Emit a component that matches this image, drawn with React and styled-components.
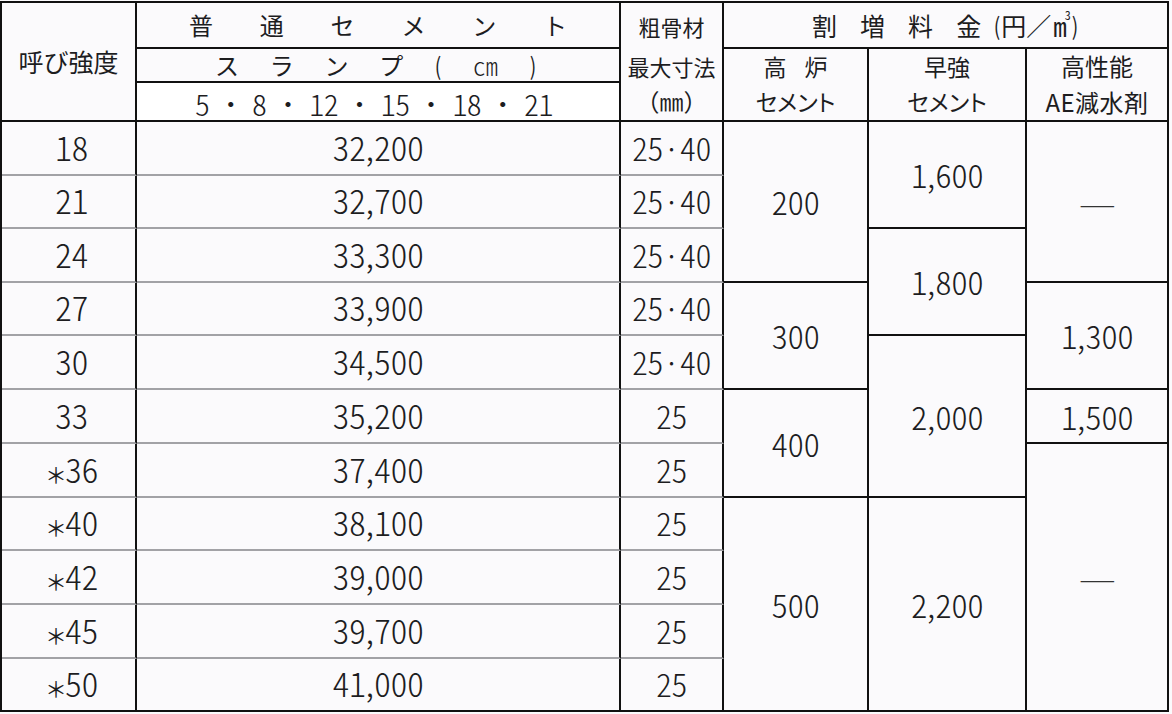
import React from "react";
import styled, { createGlobalStyle } from "styled-components";

const Global = createGlobalStyle`
  html, body { margin: 0; padding: 0; background: #fbfafc; }
  body {
    font-family: "Noto Sans CJK JP", "Noto Sans", sans-serif;
    color: #1d1d1f;
  }
`;

const Page = styled.div`
  width: 1172px;
  height: 714px;
  box-sizing: border-box;
  padding-top: 1px;
  overflow: hidden;
`;

const Table = styled.div`
  display: grid;
  grid-template-columns: 135px 484px 103px 145px 158px 142px;
  grid-template-rows: 46px 34px 39px 54px 53px 54px 53px 54px 54px 54px 53px 54px 54px 53px;
  border-left: 2px solid #111;
  border-top: 2px solid #111;
  width: max-content;
`;

const lineFor = (l) =>
  l === "none" ? "0" : l === "gray" ? "2px solid #a2a2a6" : "2px solid #111";

const Cell = styled.div`
  box-sizing: border-box;
  grid-column: ${(p) => p.$col};
  grid-row: ${(p) => p.$row};
  border-right: 2px solid #111;
  border-bottom: ${(p) => lineFor(p.$line)};
  display: flex;
  align-items: center;
  justify-content: center;
  padding-top: ${(p) => p.$pt || 0}px;
  padding-bottom: ${(p) => p.$pb || 0}px;
  padding-left: ${(p) => p.$pl || 0}px;
  background: ${(p) => p.$bg || "transparent"};
  line-height: 1;
  white-space: nowrap;
`;

const Num = styled.span`
  font-family: "Noto Sans CJK JP", "Liberation Sans", sans-serif;
  font-feature-settings: "hwid";
  font-size: ${(p) => p.$size || 34}px;
  font-weight: 300;
  letter-spacing: ${(p) => (p.$ls === undefined ? -0.5 : p.$ls)}px;
`;

const Comma = styled.span`
  font-feature-settings: normal;
  letter-spacing: 0;
`;

const Star = styled.span`
  font-family: "Noto Sans CJK JP", sans-serif;
  font-feature-settings: normal;
  font-weight: 400;
  font-size: 22px;
  letter-spacing: 0;
  margin-right: -2px;
`;

const Label = styled.span`
  font-size: ${(p) => p.$size || 23}px;
  font-feature-settings: ${(p) => (p.$palt ? '"palt"' : "normal")};
  letter-spacing: ${(p) => p.$ls || 0}px;
`;

const Spread = styled.div`
  width: ${(p) => p.$w}px;
  display: flex;
  justify-content: space-between;
  align-items: center;
  font-size: ${(p) => p.$size || 24}px;
  margin-left: ${(p) => p.$ml || 0}px;
`;

const Gap = styled.div`
  display: flex;
  align-items: center;
  gap: ${(p) => p.$gap}px;
  font-size: ${(p) => p.$size || 23}px;
`;

const Paren = styled.span`
  font-size: 24px;
  transform: scaleX(0.8);
`;

const Unit = styled.span`
  display: flex;
  align-items: center;
  margin-left: 12px;
  font-size: 25px;
`;

const Meter = styled.span`
  position: relative;
  font-family: "Noto Sans Mono CJK JP", "Noto Sans CJK JP", sans-serif;
  font-size: 27px;
  margin-left: 2px;
  margin-right: 4px;
`;

const Cube = styled.span`
  position: absolute;
  right: -4px;
  top: -3px;
  font-size: 12px;
`;

const Dash = styled.span`
  font-size: 30px;
  font-weight: 300;
  transform: scaleX(1.4);
  color: #333;
`;

const rows = [
  ["18", "32,200", "25·40"],
  ["21", "32,700", "25·40"],
  ["24", "33,300", "25·40"],
  ["27", "33,900", "25·40"],
  ["30", "34,500", "25·40"],
  ["33", "35,200", "25"],
  ["＊36", "37,400", "25"],
  ["＊40", "38,100", "25"],
  ["＊42", "39,000", "25"],
  ["＊45", "39,700", "25"],
  ["＊50", "41,000", "25"],
];

const furnace = [
  ["200", "4 / 7"],
  ["300", "7 / 9"],
  ["400", "9 / 11"],
  ["500", "11 / 15"],
];
const early = [
  ["1,600", "4 / 6"],
  ["1,800", "6 / 8"],
  ["2,000", "8 / 11"],
  ["2,200", "11 / 15"],
];
const ae = [
  ["—", "4 / 7"],
  ["1,300", "7 / 9"],
  ["1,500", "9 / 10"],
  ["—", "10 / 15"],
];

function Amount({ v, size }) {
  const parts = v.split(",");
  return (
    <Num $size={size}>
      {parts.map((p, i) => (
        <React.Fragment key={i}>
          {i > 0 && <Comma>,</Comma>}
          {p}
        </React.Fragment>
      ))}
    </Num>
  );
}

function Strength({ v }) {
  if (v.startsWith("＊")) {
    return (
      <Num>
        <Star>＊</Star>
        {v.slice(1)}
      </Num>
    );
  }
  return <Num>{v}</Num>;
}

function MergedValue({ v }) {
  if (v === "—") return <Dash>—</Dash>;
  return <Amount v={v} size={33} />;
}

export default function App() {
  return (
    <Page>
      <Global />
      <Table>
        {/* header */}
        <Cell $col="1" $row="1 / 4">
          <Label $size={25}>呼び強度</Label>
        </Cell>
        <Cell $col="2" $row="1">
          <Spread $w={378} $size={24}>
            {["普", "通", "セ", "メ", "ン", "ト"].map((c) => (
              <span key={c}>{c}</span>
            ))}
          </Spread>
        </Cell>
        <Cell $col="2" $row="2">
          <Spread $w={322} $size={24} $ml={-4}>
            <span>ス</span>
            <span>ラ</span>
            <span>ン</span>
            <span>プ</span>
            <Paren>(</Paren>
            <Num $size={25} $ls={0}>
              cm
            </Num>
            <Paren>)</Paren>
          </Spread>
        </Cell>
        <Cell $col="2" $row="3" $bg="#ffffff" $pt={3}>
          <Spread $w={358} $size={30} $ml={-8}>
            {["5", "・", "8", "・", "12", "・", "15", "・", "18", "・", "21"].map((c, i) =>
              c === "・" ? (
                <Label key={i} $size={24}>
                  ・
                </Label>
              ) : (
                <Num key={i} $size={30}>
                  {c}
                </Num>
              )
            )}
          </Spread>
        </Cell>
        <Cell $col="3" $row="1" $line="none">
          <Label $size={22}>粗骨材</Label>
        </Cell>
        <Cell $col="3" $row="2" $line="none">
          <Label $size={22}>最大寸法</Label>
        </Cell>
        <Cell $col="3" $row="3" $pb={2}>
          <Label $size={24}>（㎜）</Label>
        </Cell>
        <Cell $col="4 / 7" $row="1">
          <Gap $gap={23} $size={25}>
            <span>割</span>
            <span>増</span>
            <span>料</span>
            <span>金</span>
          </Gap>
          <Unit>
            <Paren>(</Paren>
            <span>円</span>
            <span>／</span>
            <Meter>
              m<Cube>3</Cube>
            </Meter>
            <Paren>)</Paren>
          </Unit>
        </Cell>
        <Cell $col="4" $row="2" $line="none">
          <Gap $gap={18} $size={23}>
            <span>高</span>
            <span>炉</span>
          </Gap>
        </Cell>
        <Cell $col="4" $row="3">
          <Label $size={23} $palt>
            セメント
          </Label>
        </Cell>
        <Cell $col="5" $row="2" $line="none">
          <Label $size={23}>早強</Label>
        </Cell>
        <Cell $col="5" $row="3">
          <Label $size={23} $palt>
            セメント
          </Label>
        </Cell>
        <Cell $col="6" $row="2" $line="none">
          <Label $size={24}>高性能</Label>
        </Cell>
        <Cell $col="6" $row="3">
          <Label $size={24} $ls={0.5}>
            AE減水剤
          </Label>
        </Cell>

        {/* data */}
        {rows.map(([s, price, agg], i) => {
          const r = i + 4;
          const line = i === rows.length - 1 ? "black" : "gray";
          return (
            <React.Fragment key={s}>
              <Cell $col="1" $row={r} $line={line} $pl={6} $pb={3}>
                <Strength v={s} />
              </Cell>
              <Cell $col="2" $row={r} $line={line} $pb={3}>
                <Amount v={price} />
              </Cell>
              <Cell $col="3" $row={r} $line={line} $pb={3}>
                <Num $size={32}>{agg}</Num>
              </Cell>
            </React.Fragment>
          );
        })}
        {furnace.map(([v, r]) => (
          <Cell key={"f" + v} $col="4" $row={r}>
            <MergedValue v={v} />
          </Cell>
        ))}
        {early.map(([v, r]) => (
          <Cell key={"e" + v} $col="5" $row={r}>
            <MergedValue v={v} />
          </Cell>
        ))}
        {ae.map(([v, r], i) => (
          <Cell key={"a" + i} $col="6" $row={r}>
            <MergedValue v={v} />
          </Cell>
        ))}
      </Table>
    </Page>
  );
}
